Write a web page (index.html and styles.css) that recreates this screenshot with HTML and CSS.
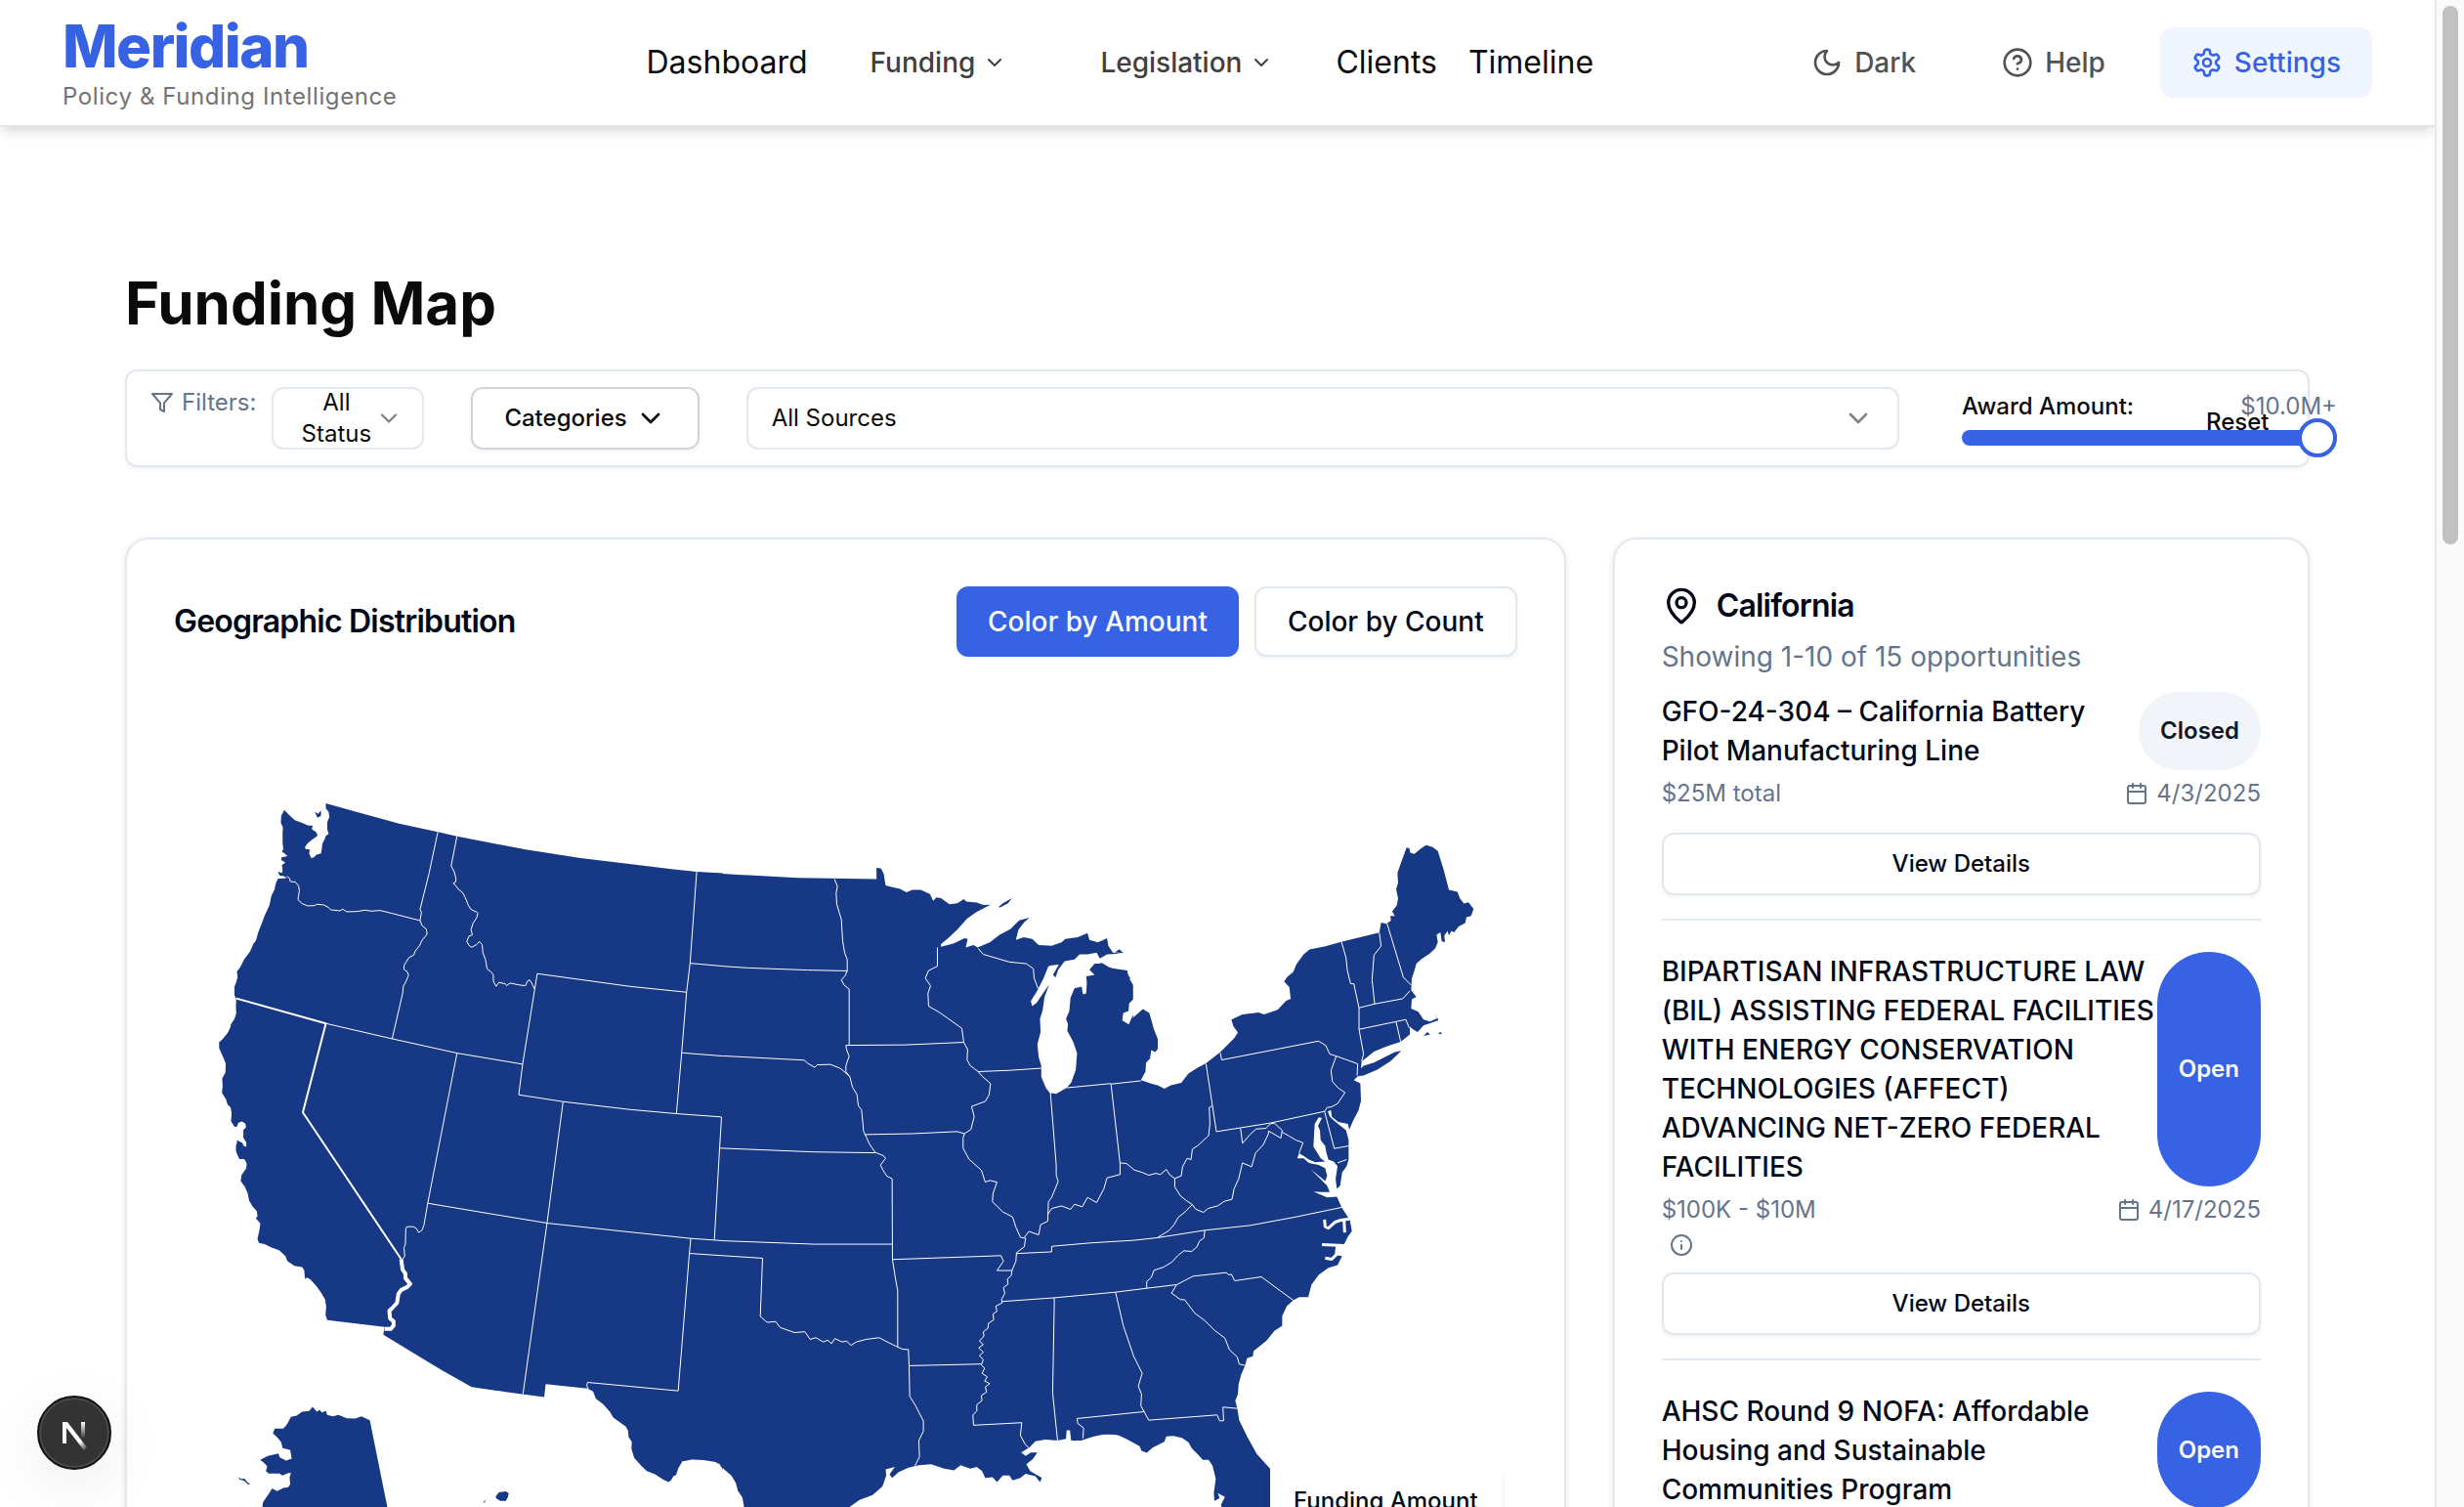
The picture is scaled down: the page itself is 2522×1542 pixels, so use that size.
FILE: index.html
```html
<!DOCTYPE html>
<html lang="en">
<head>
<meta charset="utf-8">
<title>Meridian - Funding Map</title>
<link rel="stylesheet" href="styles.css">
</head>
<body>
<svg class="sprite" aria-hidden="true">
  <symbol id="chevron" viewBox="0 0 24 24"><path d="m6 9 6 6 6-6"/></symbol>
  <symbol id="moon" viewBox="0 0 24 24"><path d="M12 3a6 6 0 0 0 9 9 9 9 0 1 1-9-9Z"/></symbol>
  <symbol id="help" viewBox="0 0 24 24"><circle cx="12" cy="12" r="10"/><path d="M9.09 9a3 3 0 0 1 5.83 1c0 2-3 3-3 3M12 17h.01"/></symbol>
  <symbol id="gear" viewBox="0 0 24 24"><path d="M12.22 2h-.44a2 2 0 0 0-2 2v.18a2 2 0 0 1-1 1.73l-.43.25a2 2 0 0 1-2 0l-.15-.08a2 2 0 0 0-2.73.73l-.22.38a2 2 0 0 0 .73 2.73l.15.1a2 2 0 0 1 1 1.72v.51a2 2 0 0 1-1 1.74l-.15.09a2 2 0 0 0-.73 2.73l.22.38a2 2 0 0 0 2.73.73l.15-.08a2 2 0 0 1 2 0l.43.25a2 2 0 0 1 1 1.73V20a2 2 0 0 0 2 2h.44a2 2 0 0 0 2-2v-.18a2 2 0 0 1 1-1.73l.43-.25a2 2 0 0 1 2 0l.15.08a2 2 0 0 0 2.73-.73l.22-.39a2 2 0 0 0-.73-2.73l-.15-.08a2 2 0 0 1-1-1.74v-.5a2 2 0 0 1 1-1.74l.15-.09a2 2 0 0 0 .73-2.73l-.22-.38a2 2 0 0 0-2.73-.73l-.15.08a2 2 0 0 1-2 0l-.43-.25a2 2 0 0 1-1-1.73V4a2 2 0 0 0-2-2z"/><circle cx="12" cy="12" r="3"/></symbol>
  <symbol id="funnel" viewBox="0 0 24 24"><path d="M22 3H2l8 9.46V19l4 2v-8.54L22 3z"/></symbol>
  <symbol id="pin" viewBox="0 0 24 24"><path d="M20 10c0 4.993-5.539 10.193-7.399 11.799a1 1 0 0 1-1.202 0C9.539 20.193 4 14.993 4 10a8 8 0 0 1 16 0"/><circle cx="12" cy="10" r="3"/></symbol>
  <symbol id="calendar" viewBox="0 0 24 24"><path d="M8 2v4M16 2v4M3 10h18"/><rect x="3" y="4" width="18" height="18" rx="2"/></symbol>
  <symbol id="info" viewBox="0 0 24 24"><circle cx="12" cy="12" r="10"/><path d="M12 16v-4M12 8h.01"/></symbol>
</svg>

<div class="page">
  <header class="topbar">
    <div class="brand">
      <a class="brand-name" href="#">Meridian</a>
      <span class="brand-tag">Policy &amp; Funding Intelligence</span>
    </div>
    <nav class="nav">
      <a class="nav-link" href="#">Dashboard</a>
      <button class="ghost" type="button">Funding <svg class="icon i24"><use href="#chevron"/></svg></button>
      <button class="ghost" type="button">Legislation <svg class="icon i24"><use href="#chevron"/></svg></button>
      <a class="nav-link" href="#">Clients</a>
      <a class="nav-link" href="#">Timeline</a>
    </nav>
    <div class="tools">
      <button class="ghost tool" type="button"><svg class="icon i32"><use href="#moon"/></svg>Dark</button>
      <button class="ghost tool" type="button"><svg class="icon i32"><use href="#help"/></svg>Help</button>
      <button class="ghost tool active" type="button"><svg class="icon i32"><use href="#gear"/></svg>Settings</button>
    </div>
  </header>

  <main class="content">
    <h1>Funding Map</h1>

    <section class="filters" aria-label="Filters">
      <div class="filters-label"><svg class="icon i24"><use href="#funnel"/></svg>Filters:</div>
      <button class="field status" type="button" aria-haspopup="listbox"><span>All Status</span><svg class="icon i28 faint"><use href="#chevron"/></svg></button>
      <button class="field categories" type="button" aria-haspopup="menu">Categories<svg class="icon i32"><use href="#chevron"/></svg></button>
      <div class="sources">
        <select class="field" aria-label="Sources"><option>All Sources</option></select>
        <svg class="icon i32 faint"><use href="#chevron"/></svg>
      </div>
      <div class="award">
        <div class="award-inner">
          <div class="award-head"><label for="award">Award Amount:</label><output for="award">$10.0M+</output></div>
          <input id="award" type="range" min="0" max="100" value="100">
        </div>
      </div>
      <button class="reset" type="button">Reset</button>
    </section>

    <div class="columns">
      <section class="card map-card">
        <div class="card-head">
          <h2>Geographic Distribution</h2>
          <div class="toggle">
            <button class="btn primary" type="button">Color by Amount</button>
            <button class="btn" type="button">Color by Count</button>
          </div>
        </div>
        <div class="map">
          <svg class="map-svg" viewBox="178 720 1375 960" role="img" aria-label="Map of the United States">
            <!-- Land, by region -->
            <g class="land">
              <path transform="translate(180 800) scale(.357143 .333333)" d="M311 86L322 99 341 118 362 126 380 134 392 134 390 146 400 152 404 158 406 166 392 176 378 188 370 200 372 206 384 208 382 220 388 234 396 232 402 224 416 220 418 208 420 190 426 178 430 166 438 160 434 146 434 124 440 108 438 92 430 82 430 66 520 93 640 128 751 154 806 167 900 187 1003 208 1160 234 1300 252 1420 268 1493 276 1568 281V1140H174L172 1120 176 1102 190 1108 196 1120 203 1122 202 1106 194 1092 194 1068 202 1060 200 1048 188 1042 178 1048 174 1060 168 1058 160 1044 161 1024 157 1000 148 990 144 975 132 955 134 935 133 910 142 893 143 865 134 842 124 818 124 800 134 790 148 772 156 755 158 744 168 728 173 712 172 690 173 668 168 655 168 628 172 618 177 600 175 582 184 570 196 545 212 522 222 498 230 486 236 462 248 430 254 412 268 380 274 350 283 330 286 314 292 298 318 296 310 290 298 288 292 276 304 280 306 270 304 256 314 248 302 240 303 232 320 228 314 222 304 214 308 206 306 190 306 155 307 140 301 126 302 104ZM398 92L408 98 416 88 416 104 406 110Z"/>
              <path transform="translate(180 1140) scale(.357143 .333333)" d="M160-20L160 0 158 22 168 38 176 36 178 26 190 22 200 30 201 42 194 50 194 74 203 88 202 101 192 98 186 88 176 80 178 94 172 110 176 124 182 138 196 138 203 150 202 166 188 188 186 206 198 224 206 244 210 266 220 284 232 298 234 314 229 320 242 336 240 354 234 384 238 396 256 400 274 410 296 418 314 436 320 452 340 466 362 470 368 480 370 506 376 502 386 508 404 530 416 548 428 570 431 592 429 616 434 633 598 654 596 668 595 678 680 733 760 785 848 838 950 854 1056 869 1060 829 1180 843 1196 852 1204 874 1224 890 1244 914 1254 932 1290 960 1296 972 1298 992 1307 1006 1306 1028 1314 1056 1334 1080 1350 1096 1374 1106 1396 1122 1412 1130 1420 1124 1426 1112 1434 1108 1440 1088 1452 1066 1476 1062 1484 1051 1492 1058 1544 1064 1552 1072 1558 1074 1568 1092V-20Z"/>
              <path transform="translate(180 1140) scale(.357143 .333333)" d="M230 1260L248 1206 250 1192 264 1170 276 1150 290 1158 308 1148 322 1146 328 1136 326 1116 330 1102 322 1102 306 1110 296 1104 266 1104 258 1096 262 1082 254 1072 242 1062 264 1050 294 1042 298 1054 316 1064 332 1058 328 1032 306 1026 302 1008 292 994 278 980 284 966 308 966 318 954 330 930 346 926 362 914 382 912 392 899 404 914 412 908 418 916 430 912 434 924 450 928 466 924 490 934 514 935 532 928 556 940 606 1206 614 1260ZM180 1114L186 1120 198 1120 204 1130 214 1137 206 1137 196 1126 182 1122ZM917 1174L926 1162 946 1159 954 1164 952 1176 946 1188 930 1188 918 1180ZM880 1194L888 1184 886 1192Z"/>
              <path transform="translate(700 860) scale(.333333 .434972)" d="M0 72L40 75 200 82 350 88 592 91 592 64 606 66 614 78 620 106 640 110 664 114 684 122 702 116 728 116 744 122 756 126 766 142 776 134 790 136 816 150 840 148 860 138 868 144 900 146 920 152 942 151 900 168 870 184 840 210 812 230 790 244 790 250 830 242 862 230 872 232 866 252 890 246 902 252 940 240 970 222 1004 208 1030 188 1062 182 1046 192 1028 210 1020 234 1044 228 1070 232 1090 246 1130 248 1160 240 1172 232 1210 228 1240 218 1246 234 1272 240 1300 230 1304 248 1318 264 1342 266 1300 268 1278 278 1268 264 1240 268 1216 268 1200 280 1170 284 1150 304 1142 322 1134 316 1152 292 1130 294 1120 296 1104 326 1084 356 1066 378 1070 390 1084 382 1098 366 1112 350 1122 340 1108 368 1102 400 1094 420 1096 450 1086 480 1090 510 1098 530 1098 556 1112 582 1124 594 1144 596 1176 582 1190 570 1204 540 1208 500 1196 474 1178 448 1180 432 1174 420 1184 402 1188 370 1200 348 1222 344 1226 362 1236 360 1238 334 1236 320 1262 316 1246 304 1262 290 1288 290 1310 300 1362 306 1366 322 1380 340V374L1366 384 1364 400 1348 404 1346 424 1366 434 1380 410V1414L1340 1400 1300 1396 1260 1402 1220 1412 1190 1412 1186 1388 1176 1388 1174 1408 1148 1412 1110 1410 1080 1414 1062 1428 1036 1440 1050 1448 1066 1440 1086 1440 1072 1456 1052 1468 1064 1484 1100 1500 1094 1510 1080 1496 1050 1490 1034 1500 1010 1506 1000 1494 980 1494 962 1510 948 1498 926 1500 916 1484 900 1474 880 1478 850 1470 830 1482 800 1478 760 1468 722 1470 690 1476 660 1486 640 1500 632 1492 648 1474 620 1480 622 1494 610 1520 580 1540 540 1552 510 1568 470 1600H200L185 1568 180 1546 166 1530 160 1512 146 1494 124 1480 108 1464 60 1458 0 1456ZM968 156L980 148 1008 136 996 148 970 158Z"/>
              <path transform="translate(1100 840) scale(.333333)" d="M60 820V480L70 440 84 436 96 446 120 454 160 466 172 484 164 488 168 500 178 520 178 550 168 560 166 584 150 590 146 612 168 626 180 604 210 578 230 590 244 640 256 670 256 700 248 710 236 704 232 730 220 742 218 770 204 796 240 808 256 812 276 822 296 812 328 804 350 776 378 758 404 744 448 710 472 686 490 668 502 650 488 630 482 610 516 594 566 588 582 594 624 580 650 552 664 546 660 510 644 494 652 480 672 464 682 440 704 410 722 395 768 386 822 371 936 343 942 312 958 316 972 306 970 292 984 292 976 278 990 260 994 238 988 210 994 190 992 160 1006 120 1020 82 1028 84 1032 98 1044 101 1062 86 1080 74 1100 80 1116 92 1134 150 1150 212 1176 218 1184 238 1196 254 1210 250 1226 270 1218 292 1204 296 1200 314 1180 324 1166 342 1158 338 1150 352 1146 338 1136 352 1138 372 1128 370 1124 342 1112 350 1116 372 1108 392 1090 408 1066 424 1050 438 1044 460 1036 484 1034 520 1050 540 1036 548 1034 576 1056 586 1072 610 1092 616 1114 606 1106 588 1118 612 1090 622 1072 628 1054 648 1040 640 1030 632 1030 656 1002 678 960 692 920 708 896 728 882 738 880 760 888 752 920 742 960 722 984 710 1004 706 970 738 930 764 888 782 870 784 858 796 878 806 880 860 872 890 856 920 844 948 840 930 810 924 790 908 788 888 778 892 784 908 802 924 834 950 842 980 842 1040 836 1060 822 1080 816 1120 806 1130 802 1100 808 1060 796 1046 780 1040 774 1020 770 998 756 980 754 950 748 936 760 912 750 910 738 930 736 960 734 1000 744 1016 756 1036 770 1046 740 1048 720 1040 706 1030 690 1020 684 1036 704 1036 720 1050 750 1056 770 1066 776 1090 770 1106 724 1068 764 1108 776 1120 784 1140 760 1140 734 1138 776 1156 806 1154 822 1190H60ZM124 404L138 394 150 406ZM1072 660L1084 648 1092 656ZM1116 652L1126 648 1128 656Z"/>
              <path transform="translate(1100 1160) scale(.333333)" d="M0 200L820 226 846 266 852 300 840 316 828 340 800 346 804 350 806 374 822 376 808 404 780 412 750 434 728 464 718 502 690 502 672 512 652 530 638 560 638 590 614 606 590 636 550 668 548 684 530 690 524 712 512 740 504 770 502 800 494 820 500 844 506 880 530 930 560 984 600 1028 640 1200H470L450 1140 462 1116 440 1104 446 1120 430 1128 428 1104 434 1060 424 1020 412 1002 394 1002 380 986 360 966 350 948 330 934 304 928 282 930 276 946 240 964 222 980 206 974 200 960 160 938 130 924 80 924 40 932 0 944Z"/>
            </g>
            <!-- Inlets and sounds -->
            <g class="water">
              <path transform="translate(1100 1160) scale(.333333)" d="M846 262L818 266 800 272 780 290 770 286 768 264M828 268L830 304M828 344L760 341M826 350L806 352 804 372 790 386 770 382"/>
            </g>
            <!-- State borders -->
            <g class="borders">
              <path transform="translate(180 800) scale(.357143 .333333)" d="M318 290L326 296 328 306 343 308 352 320 354 334 350 362 362 374 378 381 398 380 404 376 424 378 438 386 444 393 470 396 478 391 490 399 520 398 542 394 560 397 586 395 620 404 700 426M751 154L726 280 700 392 704 400 700 426 706 442 718 452 720 468 706 486 698 504 686 520 682 532 668 540 654 564 654 576 664 584 667 594 660 612 652 628 650 650 620 789M430 742L620 789 806 833 994 867M806 167L789 258 798 276 803 296 802 308 795 312 800 316 810 330 822 340 830 356 838 378 846 392 862 400 866 404 862 418 852 434 846 454 850 470 840 474 834 490 840 502 848 508 862 500 870 490 878 500 880 524 888 548 892 574 904 584 910 592 910 612 918 628 926 616 944 620 948 626 958 618 986 624 1002 626 1008 612 1014 608 1020 618 1028 636M1464 646L1300 628 1036 589 994 867 983 961 1110 982 1300 1006 1435 1019 1564 1029M1493 276L1474 557 1464 646 1450 832 1435 1019M1474 557L1568 566M1450 832L1568 842M806 833L722 1294M1110 982L1064 1355"/>
              <path transform="translate(180 1140) scale(.357143 .333333)" d="M722 274L711 342 706 356 696 364 690 352 680 346 662 346 659 354 658 400 654 410 656 436 650 446M722 274L900 306 1064 335 1280 360 1476 382 1568 389M1064 335L995 860M1476 382L1472 428 1568 435M1472 428L1440 850 1180 824 1178 834 1182 844"/>
              <path transform="translate(700 860) scale(.333333 .434972)" d="M463 91L472 108 468 124 470 150 484 186 488 236 494 264 502 280 502 307 496 318 484 328 492 340 508 350 508 482M120 296L200 300 380 305 502 307M120 507L370 517 380 524 402 534 410 528 450 527 480 536 496 546 510 556 518 580 532 598 536 624 546 634 550 664 552 684 562 700 570 714 588 734 614 742 620 748 604 764 612 776 624 790 640 796 641 986 650 1030 657 1060 657 1192M116 651L110 724 94 940M110 724L400 733 588 735M120 942L400 950 641 950M120 977L242 983 235 1120 256 1134 282 1132 296 1146 340 1158 372 1156 388 1174 406 1170 428 1180 442 1176 454 1184 464 1172 486 1180 500 1178 514 1188 530 1180 560 1174 600 1170 630 1182 657 1192 672 1197 690 1198 692 1236 694 1308 712 1330 736 1366 736 1390 722 1412 724 1450 710 1472M860 475L680 481 498 482 500 492 508 508 498 530 498 544 510 556M779 252L779 296 752 306 742 324 758 342 750 360 752 390 784 404 810 418 854 442 860 475 872 492 870 516 880 530 904 544 918 556 942 572 938 598 926 614 884 626 892 650 882 680 862 690 840 685 700 690 556 692M862 690L858 700 858 724 876 750 914 776 926 804 940 800 962 804 950 830 948 850 980 874 1010 886 1020 910 1034 934 1050 936 1046 956 1022 970 1020 990 1008 1012 1006 1024 994 1032 996 1044 982 1052 986 1066 976 1080 978 1088 958 1096 962 1108 950 1114 952 1128 936 1136 934 1148 920 1156 922 1166 908 1178 920 1186 906 1194 920 1204 908 1212 920 1222 914 1234 924 1242 916 1254 932 1262 924 1272 940 1278 926 1286 930 1298 914 1306 916 1318 900 1328 900 1342 888 1352 890 1376 1038 1370 1034 1400 1048 1420 1060 1430M904 544L1000 541 1098 536M904 254L920 268 1000 286 1052 290 1074 302 1076 324 1088 348M1126 592L1144 764 1144 788 1150 802 1130 840 1120 850 1118 896 1096 904 1090 928 1060 920 1046 934M1176 582L1312 572 1340 760 1340 786 1300 794 1290 820 1268 852 1240 840 1224 862 1200 856 1188 868 1160 860 1130 866 1118 880M641 986L974 977 982 990 962 1012 1008 1012M692 1236L916 1232M1022 972L1130 968 1130 955 1250 947 1380 941M976 1085L1140 1076 1326 1063M1138 1076L1138 1090 1133 1300 1148 1412"/>
              <path transform="translate(1100 840) scale(.333333)" d="M113 808L204 798M422 876L414 880 416 930 412 966M596 952L634 974 638 950 614 928 602 930 588 944 558 946 540 962 516 990 510 944M638 956L660 968 680 980 702 988 690 1020M404 746L436 954 600 928 768 892 798 1006 842 998M768 892L776 880 790 878 808 868 831 834 810 820 792 800 788 766 804 722 870 746 868 782M448 712L452 734 750 676 772 690 784 716 804 722M820 371L834 420 838 458 848 500 858 500 874 574 874 640 888 716 882 738M936 343L942 384 920 412 914 488 922 562M874 574L922 562 1008 546 1030 522M958 308L1010 480 1034 504M874 640L1018 610 1028 636M988 618L1002 678M808 1050L836 1040"/>
              <path transform="translate(1100 1160) scale(.333333)" d="M140 90L160 92 184 112 210 120 228 128 250 122 264 126 282 110 292 126 308 138 328 130 332 102 346 76 358 80 362 48 380 36 408 10 412 6M180 328L254 320 400 297 540 282 680 256 824 226M126 487L222 475 314 464 298 490 326 510 338 510 370 552 400 574 430 604 462 628 476 664 500 686 506 708 524 712M126 487L150 590 182 684 208 736 196 776 206 800 204 836 214 854 228 880 438 864 446 882 458 882 456 840 500 844M214 854L8 875 10 890 28 904 26 936M222 475L222 454 236 442 244 420 274 410 300 394 318 374 336 360 360 362 376 348 384 330 398 320 400 297M314 464L364 438 466 427 474 434 482 432 492 452 574 440 672 512M254 320L290 298 306 280 318 258 340 240 362 218M308 138L308 164 326 192 344 206 362 218 372 232 396 242 410 230 440 222 460 208 484 202 490 170 504 140 516 90 544 102 556 60 580 34 596 0 596-8"/>
            </g>
            <!-- Selected state: California -->
            <g class="selected">
              <path transform="translate(180 1140) scale(.357143 .333333)" d="M173-355L430-278 364-5 646 446"/>
              <path class="river" transform="translate(180 1140) scale(.357143 .333333)" d="M646 446L650 478 658 490 658 504 672 522 662 532 646 540 638 552 634 580 620 596 612 604 614 628 624 636 624 650 616 660 598 660"/>
            </g>
          </svg>
          <div class="legend">Funding Amount</div>
        </div>
      </section>

      <aside class="card">
        <div class="place"><svg class="icon i40"><use href="#pin"/></svg><h2>California</h2></div>
        <p class="count">Showing 1-10 of 15 opportunities</p>
        <ul class="grants">
          <li>
            <div class="grant-head"><h3>GFO-24-304 – California Battery Pilot Manufacturing Line</h3><span class="badge closed">Closed</span></div>
            <div class="meta"><div>$25M total</div><div class="date"><svg class="icon i24"><use href="#calendar"/></svg>4/3/2025</div></div>
            <button class="view" type="button">View Details</button>
          </li>
          <li>
            <div class="grant-head"><h3>BIPARTISAN INFRASTRUCTURE LAW (BIL) ASSISTING FEDERAL FACILITIES WITH ENERGY CONSERVATION TECHNOLOGIES (AFFECT) ADVANCING NET-ZERO FEDERAL FACILITIES</h3><span class="badge">Open</span></div>
            <div class="meta"><div>$100K - $10M<svg class="icon i24 note"><use href="#info"/></svg></div><div class="date"><svg class="icon i24"><use href="#calendar"/></svg>4/17/2025</div></div>
            <button class="view" type="button">View Details</button>
          </li>
          <li>
            <div class="grant-head"><h3>AHSC Round 9 NOFA: Affordable Housing and Sustainable Communities Program</h3><span class="badge">Open</span></div>
          </li>
        </ul>
      </aside>
    </div>
  </main>
</div>

<button class="dev-badge" type="button" aria-label="Developer tools">
  <svg viewBox="0 0 72 72">
    <defs>
      <linearGradient id="bar-fade" x1="0" y1="0" x2="0" y2="1"><stop offset="0" stop-color="#fff"/><stop offset="1" stop-color="#fff" stop-opacity="0"/></linearGradient>
      <linearGradient id="slash-fade" x1="0" y1="0" x2="1" y2="1"><stop offset=".7" stop-color="#fff"/><stop offset="1" stop-color="#fff" stop-opacity="0"/></linearGradient>
    </defs>
    <path d="M24 25h5l20 26-3 3-18-23v16h-4z" fill="url(#slash-fade)"/>
    <path d="M43 25h4v17h-4z" fill="url(#bar-fade)"/>
  </svg>
</button>
<div class="scrollbar" aria-hidden="true"><div class="thumb"></div></div>
</body>
</html>
```
FILE: styles.css
```css
* { box-sizing: border-box; }
body {
  margin: 0;
  background: #fff;
  color: #0a0a0a;
  font-family: Inter, "Liberation Sans", sans-serif;
  font-size: 24px;
  line-height: 32px;
}
h1, h2, h3, p, ul { margin: 0; padding: 0; }
ul { list-style: none; }
a { color: inherit; text-decoration: none; }
button, select { font: inherit; color: inherit; cursor: pointer; }

.sprite { position: absolute; width: 0; height: 0; }
.icon { flex: none; fill: none; stroke: currentColor; stroke-width: 2; stroke-linecap: round; stroke-linejoin: round; }
.i24 { width: 24px; height: 24px; }
.i28 { width: 28px; height: 28px; }
.i32 { width: 32px; height: 32px; }
.i40 { width: 40px; height: 40px; }
.faint { opacity: .5; }

.page { height: 100vh; padding-right: 30px; overflow: hidden; }

/* Header */
.topbar {
  display: flex;
  align-items: center;
  justify-content: space-between;
  height: 130px;
  padding: 0 64px;
  border-bottom: 2px solid #e4e4e4;
  box-shadow: 0 8px 12px -2px rgb(0 0 0 / .1), 0 4px 8px -4px rgb(0 0 0 / .1);
}
.brand { display: flex; flex-direction: column; gap: 2px; margin-right: 64px; }
.brand-name { color: #3762e3; font-size: 60px; font-weight: 800; line-height: 68px; letter-spacing: -.025em; }
.brand-tag { color: #737373; letter-spacing: .025em; }
.nav { display: flex; align-items: center; gap: 32px; }
.nav-link { font-size: 32px; line-height: 48px; }
.ghost {
  display: flex;
  align-items: center;
  gap: 8px;
  height: 72px;
  padding: 0 32px;
  border: 0;
  border-radius: 12px;
  background: none;
  color: #404040;
  font-size: 28px;
  font-weight: 500;
}
.tools { display: flex; gap: 24px; }
.tool { gap: 12px; color: #525252; }
.tool.active { background: #eff6ff; color: #3762e3; }

/* Page body */
.content { padding: 144px 128px 0; }
h1 { margin-bottom: 32px; font-size: 60px; font-weight: 700; line-height: 72px; }

.filters {
  display: flex;
  align-items: flex-start;
  margin-bottom: 72px;
  padding: 16px 24px;
  border: 2px solid #e2e8f0;
  border-radius: 12px;
  box-shadow: 0 2px 4px rgb(0 0 0 / .05);
}
.filters-label {
  display: flex;
  align-items: center;
  gap: 8px;
  margin: 4px 16px 0 0;
  color: #64748b;
  line-height: 24px;
}
.field {
  display: flex;
  align-items: center;
  height: 64px;
  padding: 0 24px;
  border: 2px solid #e2e8f0;
  border-radius: 12px;
  background: #fff;
}
.status { width: 156px; margin-right: 48px; padding: 0 20px 0 24px; }
.status span { flex: 1; text-align: center; }
.categories {
  gap: 8px;
  margin-right: 48px;
  padding: 0 32px;
  border-color: #d1d5db;
  box-shadow: 0 2px 4px rgb(0 0 0 / .05);
  font-weight: 500;
}
.sources { display: grid; flex: 1; align-items: center; margin-right: 64px; }
.sources > * { grid-area: 1 / 1; }
.sources select { width: 100%; appearance: none; }
.sources .icon { justify-self: end; margin-right: 26px; pointer-events: none; }
.award { position: relative; flex: none; width: 210px; margin-right: 24px; padding-top: 8px; }
.award-inner { width: 384px; }
.award-head { display: flex; justify-content: space-between; line-height: 24px; }
.award-head label { font-weight: 500; }
.award-head output { color: #64748b; }
.award input {
  display: block;
  appearance: none;
  width: 100%;
  height: 16px;
  margin: 12px 0 0;
  border-radius: 8px;
  background: #3762e3;
}
.award input::-webkit-slider-thumb {
  appearance: none;
  width: 40px;
  height: 40px;
  border: 4px solid #3762e3;
  border-radius: 50%;
  background: #fff;
}
.reset { width: 96px; height: 64px; padding: 8px 16px 0; border: 0; background: none; font-weight: 500; }

/* Cards */
.columns { display: grid; grid-template-columns: repeat(3, 1fr); gap: 48px; }
.card {
  padding: 48px;
  border: 2px solid #e2e8f0;
  border-radius: 24px;
  background: #fff;
  color: #020817;
  box-shadow: 0 2px 6px rgb(0 0 0 / .1);
}
.map-card { grid-column: span 2; }
.card-head { display: flex; align-items: center; justify-content: space-between; margin-bottom: 48px; }
h2 { font-size: 32px; font-weight: 600; line-height: 40px; letter-spacing: -.025em; }
.toggle { display: flex; gap: 16px; }
.btn {
  height: 72px;
  padding: 0 32px;
  border: 2px solid #e2e8f0;
  border-radius: 12px;
  background: #fff;
  font-size: 28px;
  font-weight: 500;
  box-shadow: 0 2px 4px rgb(0 0 0 / .05);
}
.btn.primary { border: 0; background: #3762e3; color: #f8fafc; }

.map { position: relative; }
.map-svg { display: block; width: 100%; }
.land { fill: #163885; }
.borders path, .selected path, .water path { fill: none; stroke: #fff; vector-effect: non-scaling-stroke; stroke-linejoin: round; }
.borders path { stroke-width: 1px; }
.selected path { stroke-width: 2px; }
.selected .river { stroke-width: 4px; }
.water path { stroke-width: 3px; }
.legend {
  position: absolute;
  top: 776px;
  right: 16px;
  padding: 24px;
  border-radius: 8px;
  background: #fff;
  font-weight: 500;
  box-shadow: 0 8px 12px -2px rgb(0 0 0 / .1);
}

/* Opportunities */
.place { display: flex; align-items: center; gap: 16px; margin-bottom: 12px; }
.count { margin-bottom: 16px; color: #64748b; font-size: 28px; line-height: 40px; }
.grants li + li { margin-top: 24px; padding-top: 32px; border-top: 2px solid #e2e8f0; }
.grant-head { display: flex; margin-bottom: 8px; }
h3 { flex: 1; font-size: 28px; font-weight: 500; line-height: 40px; }
.badge {
  display: flex;
  align-items: center;
  padding: 0 22px;
  border-radius: 60px;
  background: #3762e3;
  color: #f8fafc;
  font-weight: 600;
}
.badge.closed { background: #f1f5f9; color: #0f172a; }
.meta { display: flex; justify-content: space-between; min-height: 40px; margin-bottom: 16px; color: #64748b; }
.date { display: flex; align-items: center; gap: 8px; height: 32px; }
.note { display: block; margin: 8px 0 0 8px; }
.view {
  display: block;
  width: 100%;
  height: 64px;
  border: 2px solid #e2e8f0;
  border-radius: 12px;
  background: #fff;
  font-weight: 500;
  box-shadow: 0 2px 4px rgb(0 0 0 / .05);
}

/* Floating and window chrome */
.dev-badge {
  position: fixed;
  left: 38px;
  bottom: 38px;
  width: 76px;
  height: 76px;
  padding: 0;
  border: 2px solid #121212;
  border-radius: 50%;
  background: #333;
  box-shadow: inset 0 0 0 2px #4a4a4a, 0 16px 64px rgb(0 0 0 / .08);
}
.dev-badge svg { display: block; width: 100%; height: 100%; }
.scrollbar {
  position: fixed;
  top: 0;
  right: 0;
  bottom: 0;
  width: 30px;
  padding: 6px;
  border-left: 2px solid #e8e8e8;
  background: #fafafa;
}
.thumb { width: 16px; height: 36%; border-radius: 8px; background: #c1c1c1; }
```
